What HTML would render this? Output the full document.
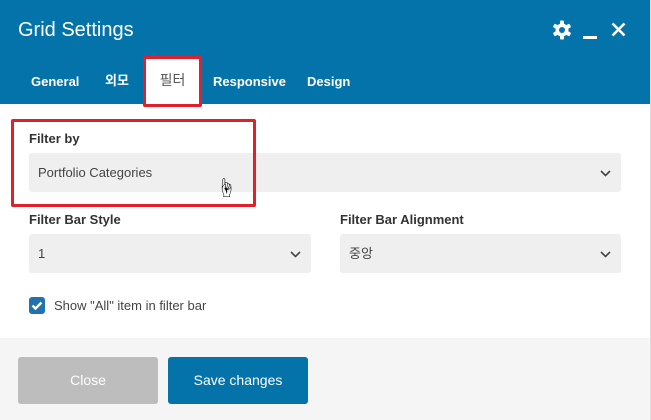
<!DOCTYPE html>
<html><head><meta charset="utf-8"><style>
*{box-sizing:border-box;margin:0;padding:0}
body{width:651px;height:420px;overflow:hidden;font-family:"Liberation Sans","Noto Sans CJK KR",sans-serif;background:#fff;position:relative}
.hdr{position:absolute;left:0;top:0;width:651px;height:104px;background:#0473aa}
.title{position:absolute;left:18px;top:19px;color:#fff;font-size:20px}
.tab{position:absolute;top:74px;color:#fff;font-size:13px;font-weight:bold}
.act{position:absolute;left:146px;top:58px;width:53px;height:46px;background:#fff;color:#555;font-size:14px;text-align:center;line-height:44px}
.red{position:absolute;border:3px solid #e0202a;border-radius:2px}
.lbl{position:absolute;font-size:13px;font-weight:bold;color:#333}
.sel{position:absolute;background:#efefef;border-radius:3px;font-size:13px;color:#444;padding-left:9px}
.sel svg{position:absolute;right:10px;top:50%;margin-top:-3px}
.foot{position:absolute;left:0;top:338px;width:651px;height:82px;background:#f5f5f5}
.btn{position:absolute;top:357px;width:140px;height:47px;border-radius:3px;color:#fff;font-size:14px;text-align:center;line-height:47px}
.edge{position:absolute;right:0;top:0;width:1px;height:420px;background:#ddd}
</style></head><body>
<div class="hdr"></div>
<div class="title">Grid Settings</div>
<svg style="position:absolute;left:552px;top:20px" width="20" height="20" viewBox="0 0 20 20"><g fill="#fff"><circle cx="10" cy="10" r="6.5"/><rect x="8" y="0.5" width="4" height="19" rx="1"/><rect x="8" y="0.5" width="4" height="19" rx="1" transform="rotate(60 10 10)"/><rect x="8" y="0.5" width="4" height="19" rx="1" transform="rotate(120 10 10)"/></g><circle cx="10" cy="10" r="3" fill="#0473aa"/></svg>
<div style="position:absolute;left:583px;top:36px;width:14px;height:3px;background:#fff"></div>
<svg style="position:absolute;left:611px;top:22px" width="15" height="15" viewBox="0 0 15 15"><path d="M1.5 1.5L13.5 13.5M13.5 1.5L1.5 13.5" stroke="#fff" stroke-width="2.6"/></svg>
<div class="tab" style="left:31px">General</div>
<div class="tab" style="left:105px;top:70px">외모</div>
<div class="act">필터</div>
<div class="tab" style="left:213px">Responsive</div>
<div class="tab" style="left:307px">Design</div>
<div class="red" style="left:143px;top:56px;width:59px;height:51px"></div>
<div class="lbl" style="left:29px;top:131px">Filter by</div>
<div class="sel" style="left:29px;top:153px;width:592px;height:39px;line-height:39px">Portfolio Categories<svg width="11" height="7" viewBox="0 0 11 7"><path d="M1 1l4.5 4.5L10 1" stroke="#444" stroke-width="1.6" fill="none"/></svg></div>
<div class="red" style="left:11px;top:119px;width:245px;height:88px"></div>
<div style="position:absolute;left:216px;top:172px;font-size:20px">☝</div>
<div class="lbl" style="left:29px;top:212px">Filter Bar Style</div>
<div class="lbl" style="left:340px;top:212px">Filter Bar Alignment</div>
<div class="sel" style="left:29px;top:234px;width:282px;height:39px;line-height:39px">1<svg width="11" height="7" viewBox="0 0 11 7"><path d="M1 1l4.5 4.5L10 1" stroke="#444" stroke-width="1.6" fill="none"/></svg></div>
<div class="sel" style="left:340px;top:234px;width:281px;height:39px;line-height:39px">중앙<svg width="11" height="7" viewBox="0 0 11 7"><path d="M1 1l4.5 4.5L10 1" stroke="#444" stroke-width="1.6" fill="none"/></svg></div>
<svg style="position:absolute;left:29px;top:297px" width="16" height="17" viewBox="0 0 16 17"><rect width="16" height="17" rx="3" fill="#2271b1"/><path d="M3.5 8.5l3 3 6-6" stroke="#fff" stroke-width="2.4" fill="none"/></svg>
<div style="position:absolute;left:54px;top:298px;font-size:13px;color:#444">Show "All" item in filter bar</div>
<div class="foot"></div>
<div class="btn" style="left:18px;background:#bdbdbd">Close</div>
<div class="btn" style="left:168px;background:#0473aa">Save changes</div>
<div class="edge"></div>
</body></html>
